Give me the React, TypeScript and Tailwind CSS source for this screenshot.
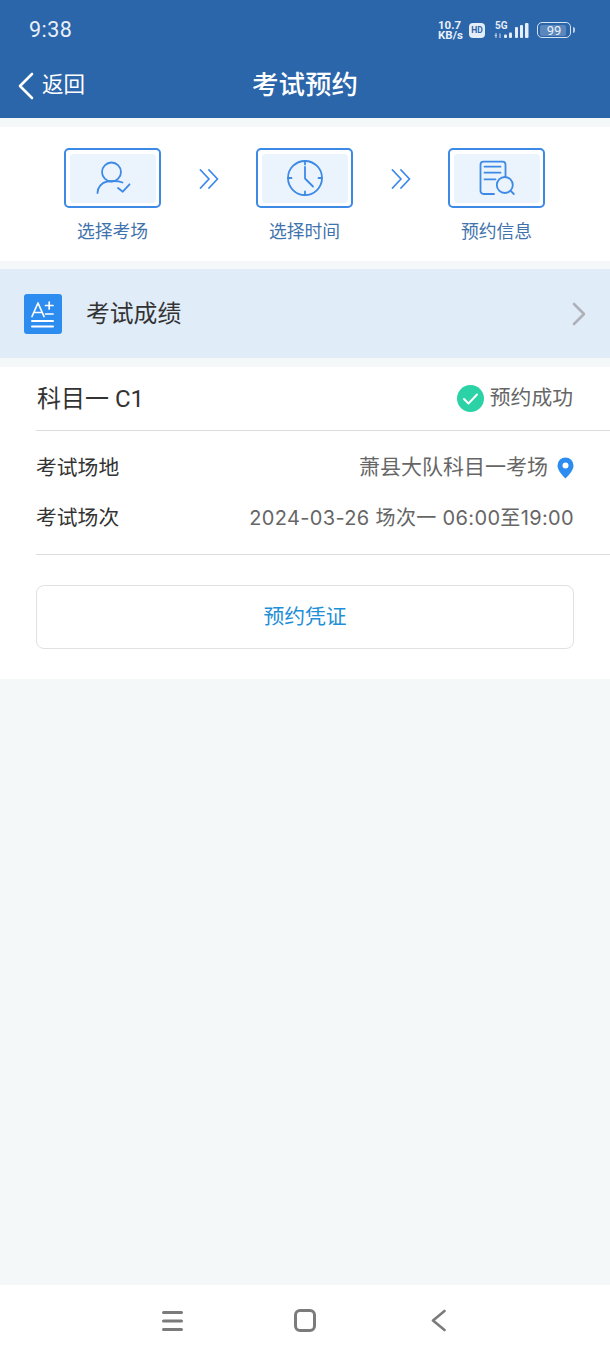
import React from 'react';

const FONT = "font-['Roboto','Noto_Sans_CJK_SC',sans-serif]";

function SignalBars() {
  return (
    <svg width="36" height="20" viewBox="0 0 36 20" fill="#e4edf8">
      <text x="1" y="9" fontSize="10" fontWeight="700" fontFamily="Roboto, sans-serif">5G</text>
      <path d="M2 13v5M0.500 15.500h2.500M6 13.500v4.500" stroke="#b9cde5" strokeWidth="1.200" fill="none" />
      <rect x="10" y="14.500" width="3" height="3.500" rx="1" />
      <rect x="15" y="12.500" width="3" height="5.500" rx="1" />
      <rect x="21" y="7" width="3" height="11" rx="1" />
      <rect x="26" y="5" width="3" height="13" rx="1" />
      <rect x="31" y="3" width="3.500" height="15" rx="1" />
    </svg>
  );
}

function StatusBar() {
  return (
    <div className="flex h-[50px] items-center justify-between pl-[29px] pr-[35px] pt-[10px] text-[#e9f0f9]">
      <span className="text-[21.500px] font-normal tracking-[0.5px] font-['Roboto',sans-serif]">9:38</span>
      <div className="flex items-center">
        <div className="w-[28px] text-[11.500px] font-bold leading-[10px] font-['Roboto',sans-serif]">
          10.7<br />KB/s
        </div>
        <span className="ml-[3px] flex h-[15px] w-[16px] items-center justify-center rounded-[4px] bg-[#e4edf8] text-[8.500px] font-bold text-[#2b65aa] font-['Roboto',sans-serif]">
          HD
        </span>
        <div className="ml-[9px]">
          <SignalBars />
        </div>
        <div className="ml-[7px] flex items-center">
          <div className="h-[16px] w-[34px] rounded-[5px] border-[1.500px] border-[#d5e2f2] p-[1.500px]">
            <div className="flex h-full w-[26px] items-center justify-center rounded-[2px] bg-[#5b87bd] pl-[3px] text-[13px] leading-none text-[#e9f0f9] font-['Roboto',sans-serif]">
              99
            </div>
          </div>
          <div className="ml-[2px] h-[6px] w-[2px] rounded-r-sm bg-[#b9cde5]" />
        </div>
      </div>
    </div>
  );
}

function Header() {
  return (
    <div className="bg-[#2b65aa]">
      <StatusBar />
      <div className="relative flex h-[68px] items-center pt-[3px] text-white">
        <svg className="ml-[18px]" width="16" height="28" viewBox="0 0 16 28" fill="none" stroke="#fff" strokeWidth="2.600" strokeLinecap="round" strokeLinejoin="round">
          <path d="M14 2L2 14l12 12" />
        </svg>
        <span className="ml-[8px] text-[21.500px]">返回</span>
        <span className="absolute inset-x-0 top-[17px] text-center text-[26.500px] font-medium leading-[36px]">考试预约</span>
      </div>
    </div>
  );
}

function PersonIcon() {
  return (
    <svg width="40" height="40" viewBox="0 0 40 40" fill="none" stroke="#3d8ae6" strokeWidth="1.800" strokeLinecap="round" strokeLinejoin="round">
      <circle cx="18.500" cy="14" r="9.500" />
      <path d="M4.500 35C4.500 29 9 24.500 14 23.500 19 22.800 25 22.500 29.500 24.500" />
      <path d="M25 30l4.800 3.700 6.700-7.400" />
    </svg>
  );
}

function ClockIcon() {
  return (
    <svg width="40" height="40" viewBox="0 0 40 40" fill="none" stroke="#3d8ae6" strokeWidth="1.800" strokeLinecap="round" strokeLinejoin="round">
      <circle cx="20" cy="20" r="17" />
      <path d="M20 3v3.500M20 33.500V37M3 20h3.500M33.500 20H37" />
      <path d="M20 9v11.500l8 8" />
    </svg>
  );
}

function DocSearchIcon() {
  return (
    <svg width="40" height="40" viewBox="0 0 40 40" fill="none" stroke="#3d8ae6" strokeWidth="1.800" strokeLinecap="round" strokeLinejoin="round">
      <path d="M17 36H6.500a3 3 0 0 1-3-3V6.700a3 3 0 0 1 3-3h19a3 3 0 0 1 3 3V18" />
      <path d="M7.500 8.700h16M7.500 14.700h16M7.500 21.300h11" />
      <circle cx="27.800" cy="27" r="8" />
      <path d="M33.500 32.700l3.300 3.300" />
    </svg>
  );
}

function Step({ label, children }: { label: string; children: React.ReactNode }) {
  return (
    <div className="flex w-[97px] flex-col items-center">
      <div className="h-[60px] w-[97px] rounded-[5px] border-2 border-[#3d8ae6] p-[3.500px]">
        <div className="flex h-full w-full items-center justify-center rounded-[4px] bg-[#ebf3fd]">{children}</div>
      </div>
      <span className="mt-[13px] whitespace-nowrap text-[17.800px] leading-[22px] text-[#3f73ad]">{label}</span>
    </div>
  );
}

function Arrow() {
  return (
    <div className="flex h-[60px] w-[95px] items-center justify-center">
      <svg className="mt-[2px]" width="20" height="20" viewBox="0 0 20 20" fill="none" stroke="#3d8ae6" strokeWidth="1.800" strokeLinecap="round" strokeLinejoin="round">
        <path d="M1.500 1l8.500 9-8.500 9M10 1l8.500 9-8.500 9" />
      </svg>
    </div>
  );
}

function Steps() {
  return (
    <div className="mt-[9px] flex h-[134px] justify-center bg-white pr-[1px] pt-[21px]">
      <Step label="选择考场"><PersonIcon /></Step>
      <Arrow />
      <Step label="选择时间"><ClockIcon /></Step>
      <Arrow />
      <Step label="预约信息"><DocSearchIcon /></Step>
    </div>
  );
}

function ScoreRow() {
  return (
    <div className="mt-[8px] flex h-[89px] items-center bg-[#e1ecf9] pl-[24px] pr-[24px]">
      <div className="h-[40px] w-[38px] rounded-[3px] bg-[#2d8cf0]">
        <svg width="38" height="40" viewBox="0 0 38 40" fill="none" stroke="#fff" strokeWidth="1.700" strokeLinecap="round" strokeLinejoin="round">
          <path d="M8 22.500L14 9l6 13.500M9.800 18.500h8.400" />
          <path d="M21.500 11.500h7.500M25.200 8v7M21.500 20h7.500" />
          <path d="M8 27h21M8 32.500h21" strokeWidth="2" />
        </svg>
      </div>
      <span className="ml-[24px] pt-[2px] text-[23.800px] text-[#333]">考试成绩</span>
      <svg className="ml-auto" width="14" height="24" viewBox="0 0 14 24" fill="none" stroke="#aeb2b8" strokeWidth="2.600" strokeLinecap="round" strokeLinejoin="round">
        <path d="M2 2l10 10L2 22" />
      </svg>
    </div>
  );
}

function InfoRow({ label, children }: { label: string; children: React.ReactNode }) {
  return (
    <div className="flex h-[50px] items-center justify-between pr-[36px]">
      <span className="pt-[1px] text-[20.800px] text-[#333]">{label}</span>
      {children}
    </div>
  );
}

function ResultCard() {
  return (
    <div className="mt-[9px] bg-white pl-[36px] pb-[30px]">
      <div className="flex h-[64px] items-center justify-between border-b border-[#dcdcdc] pr-[37px]">
        <span className="pl-[1px] text-[24px] text-[#333]">科目一 C1</span>
        <div className="flex items-center">
          <svg width="27" height="27" viewBox="0 0 27 27">
            <circle cx="13.500" cy="13.500" r="13.500" fill="#2ad2a5" />
            <path d="M7 14l4.500 4.500L20 9.500" fill="none" stroke="#fff" strokeWidth="2" strokeLinecap="round" strokeLinejoin="round" />
          </svg>
          <span className="ml-[6px] text-[20.800px] text-[#666]">预约成功</span>
        </div>
      </div>
      <div className="border-b border-[#dcdcdc] pb-[11px] pt-[12px]">
        <InfoRow label="考试场地">
          <div className="flex items-center">
            <span className="text-[21px] text-[#666]">萧县大队科目一考场</span>
            <svg className="ml-[9px] mb-[1px]" width="17" height="22" viewBox="0 0 17 22">
              <path fillRule="evenodd" d="M8.500 0.500a8 8 0 0 1 8 8c0 4.500-4 9-8 13-4-4-8-8.500-8-13a8 8 0 0 1 8-8zm0 5a3 3 0 1 0 0 6 3 3 0 0 0 0-6z" fill="#2d8cf0" />
            </svg>
          </div>
        </InfoRow>
        <InfoRow label="考试场次">
          <span className="text-[20px] tracking-[0.35px] text-[#666] font-['Inter','Noto_Sans_CJK_SC',sans-serif]">2024-03-26 场次一 06:00至19:00</span>
        </InfoRow>
      </div>
      <div className="pr-[36px] pt-[30px]">
        <div className="flex h-[64px] items-center justify-center rounded-[8px] border-[1.500px] border-[#dfe1e3] pt-[2px] text-[20.800px] text-[#1f8fd8]">
          预约凭证
        </div>
      </div>
    </div>
  );
}

function NavBar() {
  return (
    <div className="flex h-[71px] items-center bg-white">
      <svg className="ml-[161px]" width="23" height="22" viewBox="0 0 23 22" stroke="#7b7b7b" strokeWidth="3" strokeLinecap="round">
        <path d="M2.500 2.500h18M2.500 11h18M2.500 19.500h18" />
      </svg>
      <div className="ml-[110px] h-[23px] w-[22px] rounded-[6px] border-[3px] border-[#7b7b7b]" />
      <svg className="ml-[114px]" width="16" height="24" viewBox="0 0 16 24" fill="none" stroke="#7b7b7b" strokeWidth="2.600" strokeLinecap="round" strokeLinejoin="round">
        <path d="M14.500 2L3 11.500 14.500 21" />
      </svg>
    </div>
  );
}

export default function App() {
  return (
    <div className={`flex h-[1356px] w-[610px] flex-col overflow-hidden bg-[#f4f8f9] ${FONT}`}>
      <Header />
      <Steps />
      <ScoreRow />
      <ResultCard />
      <div className="flex-1" />
      <NavBar />
    </div>
  );
}
